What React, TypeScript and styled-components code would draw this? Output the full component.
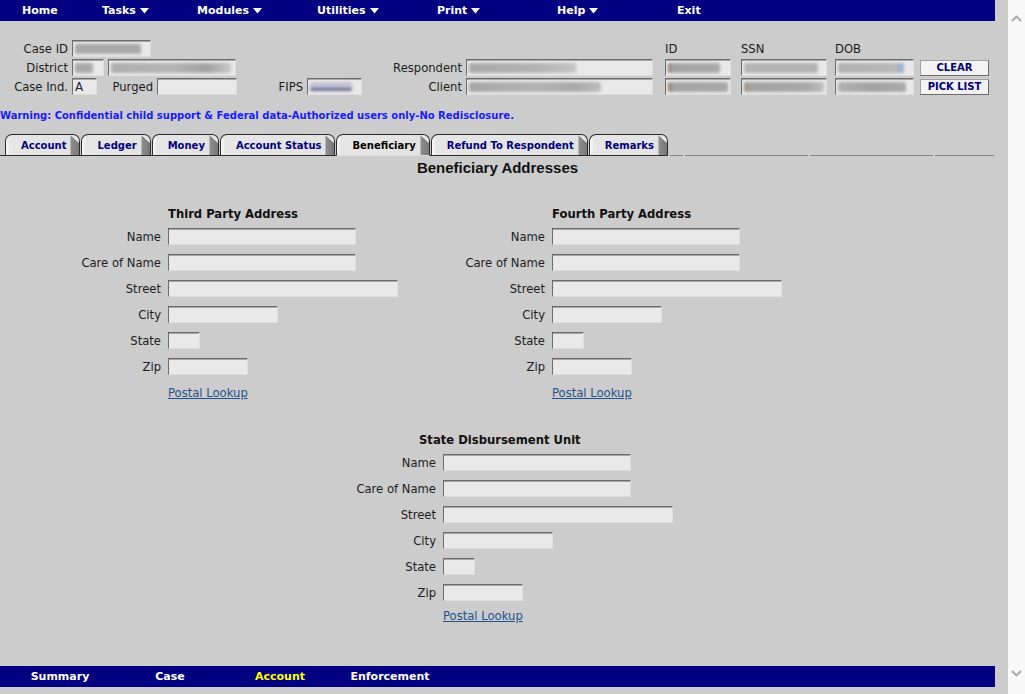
import React from "react";
import styled, { createGlobalStyle } from "styled-components";

const FONT = `"DejaVu Sans", Verdana, Tahoma, sans-serif`;

const Global = createGlobalStyle`
  html, body { margin: 0; padding: 0; height: 100%; overflow: hidden; background: #cccccc; }
  body { font-family: ${FONT}; font-size: 11px; color: #1c1c1c; }
  #root { height: 100%; }
  * { box-sizing: border-box; }
`;

const Shell = styled.div`
  display: flex;
  width: 1025px;
  height: 694px;
`;

const Viewport = styled.div`
  width: 1008px;
  height: 694px;
  background: #cccccc;
  display: flex;
  flex-direction: column;
  padding-bottom: 7px;
`;

const Scrollbar = styled.div`
  width: 17px;
  background: #f9f9f9;
  display: flex;
  flex-direction: column;
  justify-content: space-between;
  align-items: center;
  padding: 15px 0 17px;
`;

const Page = styled.div`
  width: 995px;
  display: flex;
  flex-direction: column;
  flex: 1;
`;

const TopNav = styled.nav`
  width: 995px;
  height: 21px;
  flex-shrink: 0;
  background: #000080;
  display: flex;
  align-items: center;
  padding-left: 22px;
`;

const NavItem = styled.a<{ $w?: number }>`
  width: ${(p) => (p.$w ? `${p.$w}px` : "auto")};
  color: #ffffff;
  font-weight: bold;
  font-size: 11px;
  display: flex;
  align-items: center;
  gap: 4px;
  text-decoration: none;
  white-space: nowrap;
`;

const BottomNav = styled.nav`
  margin-top: auto;
  width: 995px;
  height: 21px;
  flex-shrink: 0;
  background: #000080;
  display: flex;
  align-items: center;
  padding-left: 5px;
`;

const BottomItem = styled.a<{ $active?: boolean }>`
  width: 110px;
  text-align: center;
  color: ${(p) => (p.$active ? "#ffff00" : "#ffffff")};
  font-weight: bold;
  font-size: 11px;
  text-decoration: none;
`;

const Header = styled.div`
  display: flex;
  align-items: flex-start;
  margin-top: 19px;
`;

const LeftBlock = styled.div`
  width: 380px;
  display: flex;
  flex-direction: column;
  gap: 2px;
`;

const MidBlock = styled.div`
  display: grid;
  grid-template-columns: 82px 187px;
  grid-auto-rows: 17px;
  column-gap: 4px;
  row-gap: 2px;
  align-items: center;
  padding-top: 19px;
`;

const RightBlock = styled.div`
  margin-left: 12px;
  display: grid;
  grid-template-columns: 76px 94px 85px 69px;
  grid-auto-rows: 17px;
  row-gap: 2px;
  align-items: center;
`;

const FieldRow = styled.div`
  display: flex;
  align-items: center;
  gap: 4px;
  height: 17px;
`;

const Label = styled.span<{ $w?: number }>`
  width: ${(p) => (p.$w ? `${p.$w}px` : "auto")};
  flex-shrink: 0;
  text-align: right;
  white-space: nowrap;
  font-size: 11.6px;
  line-height: 14px;
  color: #1c1c1c;
`;

const ColHead = styled.span`
  font-size: 11.6px;
  color: #1c1c1c;
`;

const Box = styled.div<{ $w: number }>`
  width: ${(p) => p.$w}px;
  height: 17px;
  flex-shrink: 0;
  background: #e9e9e9;
  border-top: 1px solid #6c6c6c;
  border-left: 1px solid #6c6c6c;
  border-right: 1px solid #dedede;
  border-bottom: 1px solid #dedede;
  box-shadow: inset 0 1px 0 #a8a8a8;
  display: flex;
  align-items: center;
  padding-left: 2px;
  overflow: hidden;
  font-size: 12px;
  color: #1c1c3c;
`;

const Smudge = styled.span<{ $w: number; $c?: string; $h?: number }>`
  display: block;
  flex-shrink: 0;
  width: ${(p) => p.$w}px;
  height: ${(p) => p.$h ?? 10}px;
  background: ${(p) => p.$c ?? "#a9a9a9"};
  filter: blur(1.4px);
  border-radius: 2px;
`;

const Btn = styled.button`
  width: 69px;
  height: 16px;
  padding: 0;
  background: #f3f3f3;
  border: 1px solid #a0a0a0;
  border-right-color: #6a6a6a;
  border-bottom-color: #6a6a6a;
  color: #000080;
  font-family: ${FONT};
  font-weight: bold;
  font-size: 10px;
  line-height: 14px;
  text-align: center;
`;

const Warning = styled.div`
  margin-top: 15px;
  color: #1a1aff;
  font-weight: bold;
  font-size: 10px;
  line-height: 12px;
  white-space: nowrap;
`;

const TabStrip = styled.div`
  margin-top: 12px;
  display: flex;
  align-items: flex-end;
  gap: 2px;
`;

const TabList = styled.div`
  display: flex;
  align-items: flex-end;
  gap: 1px;
  padding-left: 5px;
  border-bottom: 1px solid #2c2c2c;
`;

const Tab = styled.div<{ $active?: boolean }>`
  position: relative;
  height: 22px;
  margin-bottom: -1px;
  padding: 0 13px 0 15px;
  display: flex;
  align-items: center;
  border: 1px solid #2a2a2a;
  border-bottom: 1px solid ${(p) => (p.$active ? "#dcdcdc" : "#2c2c2c")};
  border-radius: 7px 7px 0 0;
  background: linear-gradient(
    to right,
    #fafafa 0,
    #e6e6e6 4px,
    #e3e3e3 calc(100% - 9px),
    #8e8e8e calc(100% - 8px),
    #777777 100%
  );
  color: ${(p) => (p.$active ? "#000000" : "#000080")};
  font-weight: bold;
  font-size: 10px;
  white-space: nowrap;

  &::after {
    content: "";
    position: absolute;
    top: 0;
    right: 0;
    width: 9px;
    height: 8px;
    border-top-right-radius: 6px;
    background: linear-gradient(to top right, transparent 48%, #e3e3e3 52%);
  }
`;

const Filler = styled.div<{ $w: number }>`
  width: ${(p) => p.$w}px;
  height: 1px;
  background: #858585;
`;

const Title = styled.h1`
  margin: 3px 0 0;
  text-align: center;
  font-family: "Liberation Sans", Arial, sans-serif;
  font-weight: bold;
  font-size: 15px;
  line-height: 18px;
  color: #111111;
`;

const TwoCols = styled.div`
  margin-top: 30px;
  display: grid;
  grid-template-columns: 384px 1fr;
`;

const SectionWrap = styled.section<{ $pad?: number; $top?: number }>`
  display: flex;
  flex-direction: column;
  padding-left: ${(p) => p.$pad ?? 0}px;
  margin-top: ${(p) => p.$top ?? 0}px;
`;

const SectionHead = styled.h2<{ $indent: number }>`
  margin: 0 0 7px;
  padding-left: ${(p) => p.$indent}px;
  font-size: 11.6px;
  line-height: 14px;
  font-weight: bold;
  color: #111111;
`;

const FormGrid = styled.div`
  display: grid;
  grid-template-columns: 161px max-content;
  column-gap: 7px;
  row-gap: 9px;
  align-items: center;
`;

const PostalLink = styled.a<{ $gap: number }>`
  grid-column: 2;
  margin-top: ${(p) => p.$gap}px;
  color: #24528c;
  text-decoration: underline;
  font-size: 11.6px;
  line-height: 14px;
  cursor: pointer;
`;

const Caret = () => (
  <svg width="9" height="6" viewBox="0 0 9 6" aria-hidden="true">
    <polygon points="0,0 9,0 4.5,5.5" fill="#ffffff" />
  </svg>
);

const Chevron = ({ up }: { up?: boolean }) => (
  <svg width="11" height="7" viewBox="0 0 11 7" aria-hidden="true">
    <polyline
      points={up ? "1,6 5.5,1.5 10,6" : "1,1 5.5,5.5 10,1"}
      fill="none"
      stroke="#a6a6a6"
      strokeWidth="1.8"
    />
  </svg>
);

type Field = { label: string; w: number };

const FIELDS: Field[] = [
  { label: "Name", w: 188 },
  { label: "Care of Name", w: 188 },
  { label: "Street", w: 230 },
  { label: "City", w: 110 },
  { label: "State", w: 32 },
  { label: "Zip", w: 80 },
];

const AddressSection = ({
  title,
  indent,
  linkGap,
  pad,
  top,
}: {
  title: string;
  indent: number;
  linkGap: number;
  pad?: number;
  top?: number;
}) => (
  <SectionWrap $pad={pad} $top={top}>
    <SectionHead $indent={indent}>{title}</SectionHead>
    <FormGrid>
      {FIELDS.map((f) => (
        <React.Fragment key={f.label}>
          <Label>{f.label}</Label>
          <Box $w={f.w} />
        </React.Fragment>
      ))}
      <PostalLink $gap={linkGap}>Postal Lookup</PostalLink>
    </FormGrid>
  </SectionWrap>
);

export default function App() {
  return (
    <>
      <Global />
      <Shell>
        <Viewport>
          <Page>
            <TopNav>
              <NavItem $w={80}>Home</NavItem>
              <NavItem $w={95}>
                Tasks <Caret />
              </NavItem>
              <NavItem $w={120}>
                Modules <Caret />
              </NavItem>
              <NavItem $w={120}>
                Utilities <Caret />
              </NavItem>
              <NavItem $w={120}>
                Print <Caret />
              </NavItem>
              <NavItem $w={120}>
                Help <Caret />
              </NavItem>
              <NavItem>Exit</NavItem>
            </TopNav>

            <Header>
              <LeftBlock>
                <FieldRow>
                  <Label $w={68}>Case ID</Label>
                  <Box $w={79}>
                    <Smudge $w={66} />
                  </Box>
                </FieldRow>
                <FieldRow>
                  <Label $w={68}>District</Label>
                  <Box $w={32}>
                    <Smudge $w={18} />
                  </Box>
                  <Box $w={128}>
                    <Smudge $w={120} $c="linear-gradient(to right,#adadad,#b5b5b5 50%,#a2a2a2 80%,#c8c8c8)" />
                  </Box>
                </FieldRow>
                <FieldRow>
                  <Label $w={68}>Case Ind.</Label>
                  <Box $w={25}>A</Box>
                  <Label $w={52}>Purged</Label>
                  <Box $w={80} />
                  <Label $w={62}>FIPS</Label>
                  <Box $w={55}>
                    <Smudge $w={42} $h={9} $c="linear-gradient(to bottom,#c7c7d6 0,#bdbdd3 60%,#5a5a8a 80%,#7a7aa0 100%)" />
                  </Box>
                </FieldRow>
              </LeftBlock>

              <MidBlock>
                <Label>Respondent</Label>
                <Box $w={187}>
                  <Smudge $w={107} $c="linear-gradient(to right,#a9a9a9,#b2b2b2 60%,#c4c4c4)" />
                </Box>
                <Label>Client</Label>
                <Box $w={187}>
                  <Smudge $w={132} $c="linear-gradient(to right,#a6a6a6,#b4b4b4 50%,#a9a9a9 80%,#bdbdbd)" />
                </Box>
              </MidBlock>

              <RightBlock>
                <ColHead>ID</ColHead>
                <ColHead>SSN</ColHead>
                <ColHead>DOB</ColHead>
                <span />
                <Box $w={66}>
                  <Smudge $w={52} $c="linear-gradient(to right,#9a6a5a 0,#a5a5a5 8%,#a8a8a8)" />
                </Box>
                <Box $w={86}>
                  <Smudge $w={74} $c="#b3b3b3" />
                </Box>
                <Box $w={79}>
                  <Smudge $w={66} $c="linear-gradient(to right,#b0b0b0,#b8b8b8 85%,#8fb5d8)" />
                </Box>
                <Btn>CLEAR</Btn>
                <Box $w={66}>
                  <Smudge $w={60} $c="linear-gradient(to right,#9a6a5a 0,#a5a5a5 8%,#a8a8a8)" />
                </Box>
                <Box $w={86}>
                  <Smudge $w={80} $c="linear-gradient(to right,#a08a6a 0,#a3a3a3 6%,#a8a8a8 80%,#c0c0c0)" />
                </Box>
                <Box $w={79}>
                  <Smudge $w={68} $c="linear-gradient(to right,#b0b0b0,#a2a2a2 50%,#ababab)" />
                </Box>
                <Btn>PICK LIST</Btn>
              </RightBlock>
            </Header>

            <Warning>
              Warning: Confidential child support &amp; Federal data-Authorized users only-No
              Redisclosure.
            </Warning>

            <TabStrip>
              <TabList>
                <Tab>Account</Tab>
                <Tab>Ledger</Tab>
                <Tab>Money</Tab>
                <Tab>Account Status</Tab>
                <Tab $active>Beneficiary</Tab>
                <Tab>Refund To Respondent</Tab>
                <Tab>Remarks</Tab>
              </TabList>
              <Filler $w={13} />
              <Filler $w={123} />
              <Filler $w={123} />
              <Filler $w={59} />
            </TabStrip>

            <Title>Beneficiary Addresses</Title>

            <TwoCols>
              <AddressSection title="Third Party Address" indent={168} linkGap={2} />
              <AddressSection title="Fourth Party Address" indent={168} linkGap={2} />
            </TwoCols>

            <AddressSection
              title="State Disbursement Unit"
              indent={144}
              linkGap={-1}
              pad={275}
              top={33}
            />

            <BottomNav>
              <BottomItem>Summary</BottomItem>
              <BottomItem>Case</BottomItem>
              <BottomItem $active>Account</BottomItem>
              <BottomItem>Enforcement</BottomItem>
            </BottomNav>
          </Page>
        </Viewport>
        <Scrollbar>
          <Chevron up />
          <Chevron />
        </Scrollbar>
      </Shell>
    </>
  );
}
